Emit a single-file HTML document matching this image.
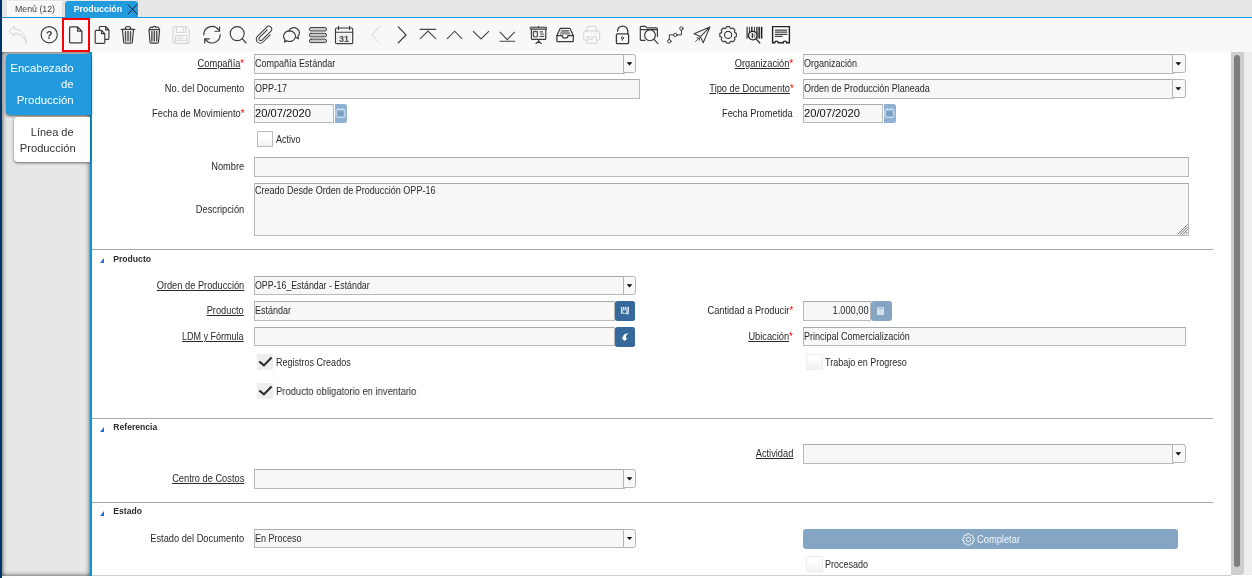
<!DOCTYPE html>
<html lang="es"><head><meta charset="utf-8"><title>Producción</title>
<style>
*{box-sizing:border-box;margin:0;padding:0}
html,body{width:1252px;height:578px;overflow:hidden;background:#fff;font-family:"Liberation Sans",sans-serif;font-size:11px;color:#333}
.a{position:absolute}
#edge{left:0;top:0;width:2px;height:578px;background:#003366}
#tabbar{left:2px;top:0;width:1250px;height:17px;background:#e6e6e6}
#tabline{left:2px;top:17px;width:1250px;height:1px;background:#129ae4}
#tab1{left:7px;top:1px;width:56px;height:16px;background:#f7f7f7;border:1px solid #fff;border-right-color:#dcdcdc;border-bottom:none;font-size:8.8px;line-height:15.5px;text-align:center;color:#444}
#tab2{left:65px;top:1px;width:73px;height:17px;background:#219ade;border-radius:3px 3px 0 0;color:#fff;font-weight:bold;font-size:8.8px;line-height:16px;padding-left:8.7px}
#toolbar{left:2px;top:18px;width:1250px;height:34px;background:#f8f8f8}
#redbox{left:62px;top:18px;width:28px;height:34px;border:2px solid #f00}
#side{left:2px;top:52px;width:88px;height:524px;background:#e7e7e7;box-shadow:inset 0 0 5px rgba(0,0,0,.75)}
#vline{left:90px;top:52px;width:2px;height:524px;background:#0a95dd}
#stab1{left:6px;top:54px;width:85px;height:61px;background:#219ade;border-radius:4px 0 0 4px;box-shadow:0 1px 3px rgba(0,0,0,.65)}
#stab2{left:14px;top:117px;width:76px;height:45px;background:#fff;border-radius:4px 0 0 4px;box-shadow:0 1px 3px rgba(0,0,0,.55)}
.st{right:1178.3px;white-space:nowrap;font-size:11.4px;line-height:16px}
#sbtrack{left:1231px;top:52px;width:13px;height:523px;background:#cecece;border-radius:0 0 3px 0}
#sbthumb{left:1234px;top:55px;width:6px;height:511.700px;background:#7b7f80;border-radius:3px}
#rstrip{left:1244px;top:52px;width:8px;height:523px;background:#eeeeee}
#bstrip{left:2px;top:576px;width:1250px;height:2px;background:#fff}
#bline{left:92px;top:575px;width:1139px;height:1px;background:#cfcfcf}
.l{position:absolute;white-space:nowrap;height:19px;line-height:19px;font-size:10.2px;transform:scaleX(.91);transform-origin:right center;color:#2a2a2a}
.l1{right:1008px}.l2{right:459px}
.l u{text-decoration:underline}
.l b{color:#f00;font-weight:normal}
.i{position:absolute;height:19.5px;border:1px solid #b9b9b9;background:#f7f7f7;border-top-color:#aaa}
.t{position:absolute;white-space:nowrap;line-height:19px;height:19px;font-size:10.2px;transform:scaleX(.885);transform-origin:left center;color:#2a2a2a}
.dd{position:absolute;width:12.5px;height:18.5px;border:1px solid #b4b4b4;background:#f8f8f8;border-radius:0 2.5px 2.5px 0;margin-left:-.7px}
.dd:after{content:"";position:absolute;left:2.3px;top:7.2px;width:5.8px;height:3.4px;background:#0a0a0a;clip-path:polygon(0 0,100% 0,50% 100%)}
.hr{position:absolute;left:92px;width:1121px;height:1px;background:#a8a8a8;margin-top:.4px}
.gh{position:absolute;left:113.3px;font-weight:bold;font-size:8.6px;color:#2c2c2c;white-space:nowrap;line-height:12px}
.tri{position:absolute;left:99.8px;width:0;height:0;border-left:4.8px solid transparent;border-bottom:5.2px solid #1e6fd6;margin-top:.3px;margin-left:-.3px}
.cb{position:absolute;width:16px;height:16px;border:1px solid #bcbcbc;border-radius:.5px;background:linear-gradient(#fff 35%,#f1f1f1)}
.cbd{position:absolute;width:16px;height:15.7px;background:#eeeeee;border-radius:1px}
.cbu{position:absolute;width:16.4px;height:15.6px;border:1px solid #ededed;border-radius:1px;background:linear-gradient(#fff 30%,#f1f1f1)}
.ck{position:absolute;width:16px;height:16px}
.btn{position:absolute;background:#35699b;border-radius:2.5px}
.btnl{position:absolute;background:#8fb1d3;border-radius:0 2.5px 2.5px 0}
</style></head><body><div id="wrap" style="position:absolute;left:0;top:0;width:1252px;height:578px;will-change:transform">
<div class="a" id="edge"></div>
<div class="a" id="tabbar"></div>
<div class="a" id="tab1">Menú (12)</div>
<div class="a" id="tab2">Producción</div>
<svg class="a" style="left:127px;top:4px" width="11" height="11" viewBox="0 0 11 11"><path d="M1 .5l9 9.5M10 .5l-9 9.5" stroke="#1a1a1a" stroke-width="1" fill="none"/></svg>
<div class="a" id="tabline"></div>
<div class="a" id="toolbar"></div>
<div class="a" id="redbox"></div>
<!--ICONS_START--><svg class="a" style="left:0;top:0" width="1252" height="54" viewBox="0 0 1252 54" fill="none" stroke="#3a3a3a" stroke-width="1.15" stroke-linecap="round" stroke-linejoin="round">
<!-- 1 undo (disabled) -->
<path d="M14.3 26.2L9.2 31.2L14 35.8V33.2C19.5 33.2 24.5 36.5 26.4 43.8C26.6 36 22 29.2 14.3 28.8Z" stroke="#d2d2d2" stroke-width="1"/>
<!-- 2 help -->
<circle cx="49.2" cy="34.7" r="8.1"/>
<text x="49.2" y="38.5" font-family="Liberation Sans, sans-serif" font-size="10.5" font-weight="bold" text-anchor="middle" fill="#3a3a3a" stroke="none">?</text>
<!-- 3 new -->
<path d="M70.6 26.9H77.6L81.9 31.2V41.9a1 1 0 0 1-1 1H70.6a1 1 0 0 1-1-1V27.9a1 1 0 0 1 1-1ZM77.6 26.9V31.2H81.9" stroke-width="1.25"/>
<!-- 4 copy -->
<path d="M99.3 30.2V27.4a.9.9 0 0 1 .9-.9H105.6L108.9 29.8V38.5a.9.9 0 0 1-.9.9H104.9M105.6 26.5V29.8H108.9"/>
<path d="M96.1 30.3H101.5L104.8 33.6V42.4a.9.9 0 0 1-.9.9H96.1a.9.9 0 0 1-.9-.9V31.2a.9.9 0 0 1 .9-.9ZM101.5 30.3V33.6H104.8" fill="#f8f8f8"/>
<!-- 5 trash -->
<path d="M121.3 29.4H134.7M125.2 29.2C125.2 25.6 130.8 25.6 130.8 29.2M122.5 29.6L123.6 42a1.2 1.2 0 0 0 1.2 1.1H131.2a1.2 1.2 0 0 0 1.2-1.1L133.5 29.6"/>
<path d="M125.5 31.5V41M128 31.5V41M130.5 31.5V41" stroke-width="1.5" stroke="#555"/>
<!-- 6 trash full -->
<path d="M149 29.6L150 42a1.2 1.2 0 0 0 1.2 1.1H157.3a1.2 1.2 0 0 0 1.2-1.1L159.6 29.6ZM149.4 29.4C149.6 27.4 151.5 26.6 152.6 27.6C153.2 26 155.2 26 155.8 27.5C157.2 26.4 159.2 27.4 159.2 29.4"/>
<path d="M151.9 31.5V41M154.3 31.5V41M156.7 31.5V41" stroke-width="1.5" stroke="#555"/>
<!-- 7 save (disabled) -->
<g stroke="#d2d2d2" stroke-width="1">
<path d="M174 26.7H186.3L189.2 29.6V42.3a1 1 0 0 1-1 1H174a1 1 0 0 1-1-1V27.7a1 1 0 0 1 1-1Z"/>
<path d="M176.4 26.7V32.4H185.8V26.7M183.3 28V30.8M175.6 43.2V35.6H186.8V43.2M177.5 38H182M177.5 40.3H185"/>
</g>
<!-- 8 refresh -->
<path d="M203.8 34.8A8.2 8.2 0 0 1 218.600 29.800M219.600 26.800V31.200H215M220.200 34.600A8.200 8.200 0 0 1 205.500 39.700M204.700 43V38.900H209.300"/>
<!-- 9 search -->
<circle cx="237.2" cy="33.6" r="7"/><path d="M242.2 38.7L246 43"/>
<!-- 10 clip -->
<g transform="translate(264.8 35) rotate(45) scale(.86)"><path d="M1.3 -6.2V6.6a2.1 2.1 0 0 1-4.2 0V-8.2a3.4 3.4 0 0 1 6.8 0V7.2a4.6 4.6 0 0 1-9.2 0V-4.5" stroke-width="1.2" transform="scale(-1 1) translate(1 0)"/></g>
<!-- 11 chat -->
<path d="M289 30.6A5.5 5.2 0 1 1 297.8 36.6L298.6 38.8L296 37.6"/>
<path d="M289.6 30.9a6 5.3 0 1 1-3.2 9.8L284.6 42.2L285 39.6A6 5.3 0 0 1 289.6 30.9Z" fill="#f8f8f8"/>
<!-- 12 lines -->
<g fill="#c9c9c9" stroke="#444" stroke-width="1">
<rect x="309.3" y="27.5" width="17.3" height="3.5" rx="1.75"/>
<rect x="309.3" y="33.3" width="17.3" height="3.5" rx="1.75"/>
<rect x="309.3" y="39.1" width="17.3" height="3.5" rx="1.75"/>
</g>
<!-- 13 calendar -->
<rect x="335.5" y="28" width="17.2" height="15.6" rx="1.2"/>
<path d="M335.5 32.2H352.7M338.5 26.2V29.6M349.6 26.2V29.6"/>
<rect x="337.6" y="34.2" width="13" height="7.6" fill="#ececec" stroke="none"/>
<text x="344.1" y="41.6" font-family="Liberation Sans, sans-serif" font-size="9" font-weight="bold" text-anchor="middle" fill="#4a4a4a" stroke="none">31</text>
<!-- 14 prev (disabled) 15 next -->
<path d="M379.4 26.9L371.8 34.9L379.4 42.9" stroke="#d2d2d2" stroke-width="1" stroke-linejoin="miter"/>
<path d="M398.3 26.9L406 34.9L398.3 42.9" stroke-width="1.3" stroke-linejoin="miter"/>
<!-- 16-19 -->
<g stroke-linejoin="miter" stroke-linecap="butt" stroke="#444" stroke-width="1.1">
<path d="M419.7 29.4H436.2M420 38.9L428 31L436 38.9"/>
<path d="M447 38.9L454.6 31.2L462.2 38.9"/>
<path d="M473 31.2L481 38.9L489 31.2"/>
<path d="M499.8 31.8L507.3 39.6L514.8 31.8M499.6 41.3H515"/>
</g>
<!-- 20 presentation -->
<rect x="530.7" y="27.2" width="15.8" height="2.1" fill="#aaa" stroke-width=".9"/>
<path d="M531.4 29.4V38.4a1 1 0 0 0 1 1H544.8a1 1 0 0 0 1-1V29.4M538.6 26.4V27M538.6 39.6V41.2M536 43.5L538.6 41.2L541.2 43.5"/>
<rect x="533.4" y="31.5" width="4" height="5.4" rx=".8" stroke-width="1.3" stroke="#555"/>
<path d="M540 31.8H542.6M540.6 34H543.8M540 36.4H543.8" stroke="#555"/>
<!-- 21 inbox -->
<path d="M560.2 28.4H570L573.3 35.4V40.7a1 1 0 0 1-1 1H557.9a1 1 0 0 1-1-1V35.4Z" stroke-width="1.25"/>
<path d="M556.9 35.6H562.2C562.2 39 568 39 568 35.600H573.3" stroke-width="1.25"/>
<path d="M561.8 30.6H568.4M561 32.2H569.2M560.3 33.8H569.9" stroke="#777" stroke-width="1.3"/>
<!-- 22 print (disabled) -->
<g stroke="#d4d4d4" stroke-width="1">
<path d="M587 31V27.3a.8.8 0 0 1 .8-.8H595.6a.8.8 0 0 1 .8.8V31"/>
<rect x="583.7" y="31" width="16" height="9.4" rx="2"/>
<rect x="587" y="37" width="9.4" height="6.4" rx=".8" fill="#f8f8f8"/>
<path d="M589 39.3H593M594.6 33.4V33.5M596.8 33.4V33.5"/>
</g>
<!-- 23 lock -->
<rect x="616.4" y="33.8" width="12.2" height="9.8" rx="1.2" stroke-width="1.3"/>
<path d="M617.5 31.2A5.15 5.15 0 0 1 627.8 31.2V33.8" stroke-width="1.3"/>
<circle cx="622.4" cy="38" r="1.1" stroke-width=".9"/><path d="M622.4 39.2V40.3" stroke-width=".9"/>
<!-- 24 folder search -->
<path d="M645 40.3H641.3a1 1 0 0 1-1-1V27.4a1 1 0 0 1 1-1H645.5L647 27.9H656.4a1 1 0 0 1 1 1V36.5M640.6 29.6H657.2"/>
<circle cx="650" cy="35.3" r="5.4" fill="#f8f8f8"/><path d="M653.9 39.3L658 43.7"/>
<!-- 25 workflow -->
<g stroke-width="1">
<circle cx="681.4" cy="28.5" r="1.7"/><circle cx="675.3" cy="34.9" r="1.7"/><circle cx="669.3" cy="41.3" r="1.7"/>
<path d="M681.4 30.2V34.9H677M673.6 34.900H669.3V39.600"/>
</g>
<!-- 26 send -->
<path d="M710 26.9L694 33.8L700.4 36.6L703.2 42.8ZM710 26.9L700.4 36.600" stroke-width="1.05"/>
<path d="M695.6 41.5L699.3 38M697 37.9H699.4V40.2" stroke-width=".9"/>
<!-- 27 gear -->
<path d="M734.72 32.63 L736.36 33.39 L736.36 36.41 L734.72 37.17 L734.39 37.98 L735.01 39.68 L732.88 41.81 L731.18 41.19 L730.37 41.52 L729.61 43.16 L726.59 43.16 L725.83 41.52 L725.02 41.19 L723.32 41.81 L721.19 39.68 L721.81 37.98 L721.48 37.17 L719.84 36.41 L719.84 33.39 L721.48 32.63 L721.81 31.82 L721.19 30.12 L723.32 27.99 L725.02 28.61 L725.83 28.28 L726.59 26.64 L729.61 26.64 L730.37 28.28 L731.18 28.61 L732.88 27.99 L735.01 30.12 L734.39 31.82Z"/>
<circle cx="728.1" cy="34.9" r="3.6"/>
<!-- 28 barcode search -->
<g stroke="none">
<rect x="746.2" y="26.8" width="2" height="11.8" fill="#777"/>
<rect x="749" y="26.8" width=".9" height="11.8" fill="#333"/>
<rect x="751" y="26.8" width="1.6" height="11.8" fill="#333"/>
<rect x="754" y="26.8" width=".9" height="11.8" fill="#333"/>
<rect x="756.2" y="26.8" width="1.4" height="11.8" fill="#333"/>
<rect x="758.4" y="26.8" width="1.5" height="11.8" fill="#222"/>
<rect x="760.8" y="26.8" width="1.6" height="11.8" fill="#222"/>
</g>
<circle cx="752.8" cy="35.6" r="4.3" fill="#f8f8f8" stroke="#222" stroke-width="1.3"/>
<rect x="751.7" y="33.2" width="1.5" height="4.8" fill="#333" stroke="none"/>
<rect x="754" y="33.6" width="1.3" height="4" fill="#999" stroke="none"/>
<path d="M756 38.800L759.800 43" stroke="#222" stroke-width="1.2"/>
<!-- 29 receipt -->
<path d="M772.6 26.6H789.4V42.800H786.700A1.700 1.700 0 0 0 783.300 42.800H778.200A1.700 1.700 0 0 0 774.800 42.800H772.600Z" fill="#fff" stroke="#222" stroke-width="1.4" stroke-linejoin="miter"/>
<path d="M774.900 30.100H787.300M774.900 32.200H787.300M774.900 34.300H787.300M774.900 36.400H782.500" stroke="#444" stroke-width="1.2" stroke-linecap="butt"/>
</svg>
<!--ICONS_END-->
<div class="a" id="side"></div>
<div class="a" id="vline"></div>
<div class="a" id="stab1"></div>
<div class="a" id="stab2"></div>
<div class="a st" style="top:60px;color:#fff">Encabezado</div>
<div class="a st" style="top:76px;color:#fff">de</div>
<div class="a st" style="top:92px;color:#fff">Producción</div>
<div class="a st" style="top:124px;color:#333;right:1178.4px;font-size:11px">Línea de</div>
<div class="a st" style="top:140px;color:#333;right:1176.3px;font-size:11.2px">Producción</div>
<div class="a" id="sbtrack"></div>
<div class="a" id="sbthumb"></div>
<div class="a" id="rstrip"></div>
<div class="a" id="bstrip"></div><div class="a" id="bline"></div>

<!-- row 1 -->
<div class="l l1" style="top:54px"><u>Compañía</u><b>*</b></div>
<div class="i" style="left:254px;top:54px;width:371px"></div><div class="dd" style="left:624px;top:54px"></div>
<div class="t" style="left:255.4px;top:54px">Compañía Estándar</div>
<div class="l l2" style="top:54px"><u>Organización</u><b>*</b></div>
<div class="i" style="left:803px;top:54px;width:371px"></div><div class="dd" style="left:1172.8px;top:54px;width:13.6px"></div>
<div class="t" style="left:804.4px;top:54px">Organización</div>
<!-- row 2 -->
<div class="l l1" style="top:79px">No. del Documento</div>
<div class="i" style="left:254px;top:79px;width:385.5px"></div>
<div class="t" style="left:255.4px;top:79px">OPP-17</div>
<div class="l l2" style="top:79px"><u>Tipo de Documento</u><b>*</b></div>
<div class="i" style="left:803px;top:79px;width:371px"></div><div class="dd" style="left:1172.8px;top:79px;width:13.6px"></div>
<div class="t" style="left:804.4px;top:79px">Orden de Producción Planeada</div>
<!-- row 3 -->
<div class="l l1" style="top:104px">Fecha de Movimiento<b>*</b></div>
<div class="i" style="left:254px;top:104px;width:80px;height:19px"></div>
<div class="btnl" style="left:334.5px;top:104.2px;width:12.8px;height:18.4px"></div>
<div class="t" style="left:255.4px;top:103.2px;font-size:11.6px;color:#111;transform:scaleX(.965)">20/07/2020</div>
<div class="l l2" style="top:104px">Fecha Prometida</div>
<div class="i" style="left:803px;top:104px;width:80px;height:19px"></div>
<div class="btnl" style="left:883.5px;top:104.2px;width:12.8px;height:18.4px"></div>
<div class="t" style="left:804.4px;top:103.2px;font-size:11.6px;color:#111;transform:scaleX(.965)">20/07/2020</div>
<!-- row 4 -->
<div class="cb" style="left:257px;top:131px"></div>
<div class="t" style="left:275.5px;top:129.5px">Activo</div>
<!-- row 5 -->
<div class="l l1" style="top:157.3px">Nombre</div>
<div class="i" style="left:254px;top:157px;width:935px"></div>
<!-- row 6 -->
<div class="l l1" style="top:200px">Descripción</div>
<div class="i" style="left:254px;top:183px;width:935px;height:52.5px"></div>
<div class="t" style="left:255.4px;top:181px">Creado Desde Orden de Producción OPP-16</div>
<svg class="a" style="left:1177px;top:224px" width="11" height="11" viewBox="0 0 11 11"><path d="M10.500 .5L.5 10.500M10.500 3L3 10.500M10.500 5.500L5.500 10.500M10.500 8L8 10.500" stroke="#666" stroke-width=".9" fill="none"/></svg>

<div class="hr" style="top:249px"></div>
<div class="tri" style="top:258px"></div><div class="gh" style="top:253px">Producto</div>

<div class="l l1" style="top:276.4px"><u>Orden de Producción</u></div>
<div class="i" style="left:254px;top:276px;width:371px;height:18.6px"></div><div class="dd" style="left:624px;top:276px"></div>
<div class="t" style="left:255.4px;top:276.4px;transform:scaleX(.865)">OPP-16_Estándar - Estándar</div>

<div class="l l1" style="top:301.4px"><u>Producto</u></div>
<div class="i" style="left:254px;top:301px;width:361px"></div>
<div class="btn" style="left:615px;top:301px;width:20px;height:19.7px"></div>
<div class="t" style="left:255.4px;top:301.4px">Estándar</div>
<div class="l l2" style="top:301.4px">Cantidad a Producir<b>*</b></div>
<div class="i" style="left:803px;top:301px;width:68px"></div>
<div class="btnl" style="left:871.2px;top:301px;width:20.6px;height:19.9px;border-radius:3px;background:#84a5c4"></div>
<div class="l" style="top:301.4px;right:383.5px">1.000,00</div>

<div class="l l1" style="top:327.2px;transform:scaleX(.885)"><u>LDM y Fórmula</u></div>
<div class="i" style="left:254px;top:327px;width:361px;height:18.7px"></div>
<div class="btn" style="left:615px;top:327px;width:20px;height:19.7px"></div>
<div class="l l2" style="top:327px"><u>Ubicación</u><b>*</b></div>
<div class="i" style="left:803px;top:327px;width:383px;height:18.6px"></div>
<div class="t" style="left:804.4px;top:327px">Principal Comercialización</div>

<div class="cbd" style="left:257px;top:354.2px"></div><svg class="ck" style="left:257px;top:354.2px" viewBox="0 0 16 16"><path d="M2.3 7.5L6.9 11.4L14.6 3.4" fill="none" stroke="#2b2b2b" stroke-width="2.1"/></svg>
<div class="t" style="left:275.5px;top:352.9px">Registros Creados</div>
<div class="cbu" style="left:806.2px;top:354.1px"></div>
<div class="t" style="left:825px;top:352.9px">Trabajo en Progreso</div>

<div class="cbd" style="left:257px;top:383.2px"></div><svg class="ck" style="left:257px;top:383.2px" viewBox="0 0 16 16"><path d="M2.3 7.5L6.9 11.4L14.6 3.4" fill="none" stroke="#2b2b2b" stroke-width="2.1"/></svg>
<div class="t" style="left:275.5px;top:382.4px;transform:scaleX(.925)">Producto obligatorio en inventario</div>

<div class="hr" style="top:418px"></div>
<div class="tri" style="top:426.5px"></div><div class="gh" style="top:421px">Referencia</div>

<div class="l l2" style="top:444.4px"><u>Actividad</u></div>
<div class="i" style="left:803px;top:444px;width:371px"></div><div class="dd" style="left:1172.8px;top:444px;width:13.6px"></div>

<div class="l l1" style="top:469.4px"><u>Centro de Costos</u></div>
<div class="i" style="left:254px;top:469px;width:371px"></div><div class="dd" style="left:624px;top:469px"></div>

<div class="hr" style="top:502px"></div>
<div class="tri" style="top:510.5px"></div><div class="gh" style="top:505px">Estado</div>

<div class="l l1" style="top:528.9px">Estado del Documento</div>
<div class="i" style="left:254px;top:528.5px;width:371px"></div><div class="dd" style="left:624px;top:528.5px;height:19.3px"></div>
<div class="t" style="left:255.4px;top:528.9px">En Proceso</div>
<div class="a" style="left:803px;top:529px;width:375px;height:19.5px;background:#84a5c4;border-radius:3px"></div>
<div class="t" style="left:977px;top:529.8px;color:#f1f5f9;transform:scaleX(.915)">Completar</div>

<div class="cbu" style="left:806.2px;top:556.3px"></div>
<div class="t" style="left:825px;top:554.9px">Procesado</div>
<svg class="a" style="left:0;top:0;pointer-events:none" width="1252" height="578" viewBox="0 0 1252 578" fill="none">
<!-- date button icons -->
<g id="cal1"><rect x="336.1" y="109.4" width="8.8" height="7.9" rx="1.2" stroke="#dbe8f5" stroke-width="1"/><rect x="337.5" y="111.6" width="6" height="4.3" fill="#7c9fc6"/><path d="M338.4 108.2V110.2M342.6 108.200V110.200" stroke="#dbe8f5" stroke-width="1"/></g>
<g transform="translate(549 0)"><rect x="336.1" y="109.4" width="8.8" height="7.9" rx="1.2" stroke="#dbe8f5" stroke-width="1"/><rect x="337.500" y="111.600" width="6" height="4.3" fill="#7c9fc6"/><path d="M338.400 108.200V110.200M342.600 108.200V110.200" stroke="#dbe8f5" stroke-width="1"/></g>
<!-- product search icon -->
<g fill="#d3e0ee"><rect x="620.9" y="306.9" width="1.5" height="7"/><rect x="623" y="306.9" width="1" height="7"/><rect x="624.6" y="306.900" width="1.6" height="7"/><rect x="626.7" y="306.900" width="1" height="7.400"/><rect x="628" y="306.900" width="1" height="7"/></g>
<circle cx="624.6" cy="311.6" r="2" fill="#35699b" stroke="#d3e0ee" stroke-width=".8"/><path d="M626.2 313.200L628.300 315" stroke="#d3e0ee" stroke-width=".8"/>
<!-- bom arrow -->
<path d="M628.6 333C624.5 333.5 622.8 335.500 623.200 337.600L621.400 337.600L624.400 341L627.600 338.400L626 338.200C625.600 336.500 626.300 334.800 628.600 333Z" fill="#fff"/>
<!-- calculator -->
<rect x="877.1" y="307.2" width="6.9" height="7.7" rx=".6" fill="#dfe8f2"/><path d="M878.3 308.800H882.800" stroke="#84a5c4" stroke-width="1"/><path d="M878.600 311H879.600M880.300 311H881.300M882 311H883M878.600 313H879.600M880.300 313H881.300M882 313H883" stroke="#b4c8dc" stroke-width="1"/>
<!-- completar gear -->
<path d="M972.75 538.01 L974.11 538.46 L974.11 540.54 L972.75 540.99 L972.53 541.52 L973.17 542.80 L971.70 544.27 L970.42 543.63 L969.89 543.85 L969.44 545.21 L967.36 545.21 L966.91 543.85 L966.38 543.63 L965.10 544.27 L963.63 542.80 L964.27 541.52 L964.05 540.99 L962.69 540.54 L962.69 538.46 L964.05 538.01 L964.27 537.48 L963.63 536.20 L965.10 534.73 L966.38 535.37 L966.91 535.15 L967.36 533.79 L969.44 533.79 L969.89 535.15 L970.42 535.37 L971.70 534.73 L973.17 536.20 L972.53 537.48Z" stroke="#fff" stroke-width=".9" stroke-linejoin="round"/><circle cx="968.4" cy="539.5" r="2.3" stroke="#fff" stroke-width=".9"/>
</svg>
</div></body></html>
